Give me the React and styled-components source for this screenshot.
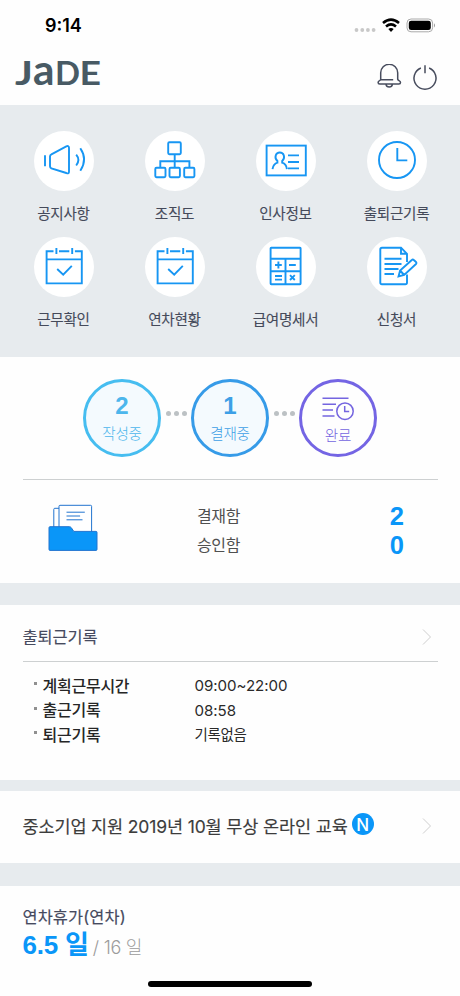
import React from "react";
import styled, { createGlobalStyle } from "styled-components";

const KR = '"Noto Sans CJK KR", sans-serif';
const SF = 'Inter, "Noto Sans CJK KR", sans-serif';
const AR = '"Liberation Sans", "Noto Sans CJK KR", sans-serif';

const Global = createGlobalStyle`
  * { box-sizing: border-box; }
  body { margin: 0; background: #fff; font-family: ${KR}; }
  svg { display: block; flex: none; }
`;

const Screen = styled.main`
  width: 460px;
  height: 996px;
  display: flex;
  flex-direction: column;
  overflow: hidden;
  background: #fefefe;
`;

const StatusBar = styled.div`
  height: 50px;
  display: flex;
  align-items: center;
  justify-content: space-between;
  padding: 0 24px 0 45px;
`;

const Clock = styled.span`
  font: 600 18px/24px ${SF};
  letter-spacing: 0;
  color: #000;
  padding-top: 2px;
`;

const Header = styled.header`
  height: 55px;
  display: flex;
  align-items: center;
  justify-content: space-between;
  padding: 0 22px 0 15px;
`;

const LogoMark = styled.svg`
  overflow: visible;
  fill: #485a64;
  font: 700 31px Lato, sans-serif;
`;

const Menu = styled.nav`
  height: 252px;
  flex: none;
  background: #e7ebee;
  display: grid;
  grid-template-columns: repeat(4, 111px);
  grid-auto-rows: 105.6px;
  padding: 26px 8px 0;
`;

const MenuItem = styled.div`
  display: flex;
  flex-direction: column;
  align-items: center;
  gap: 11px;
`;

const MenuIcon = styled.div`
  width: 60px;
  height: 60px;
  border-radius: 50%;
  background: #fff;
`;

const MenuLabel = styled.span`
  font: 400 14.6px/22px ${KR};
  letter-spacing: -0.3px;
  color: #454a5a;
  -webkit-text-stroke: 0.1px #454a5a;
  white-space: nowrap;
`;

const Card = styled.section`
  flex: none;
  height: ${(p) => p.$h}px;
  padding: 0 22.5px;
  background: #fefefe;
`;

const Divider = styled.div`
  flex: none;
  height: ${(p) => p.$h}px;
  background: #e7ebee;
`;

const Steps = styled.div`
  height: 123px;
  display: flex;
  align-items: flex-start;
  justify-content: center;
  padding-top: 22px;
  border-bottom: 1px solid #cdd0d1;
`;

const Step = styled.div`
  width: 78px;
  height: 78px;
  border-radius: 50%;
  border: 3px solid ${(p) => p.$c};
  background: ${(p) => p.$bg};
  color: ${(p) => p.$t};
  display: flex;
  flex-direction: column;
  align-items: center;
`;

const StepCount = styled.b`
  font: 700 24px/26px ${AR};
  margin-top: 11px;
`;

const StepIcon = styled.div`
  height: 24px;
  margin-top: 15px;
`;

const StepLabel = styled.span`
  font: 300 14.6px/22px ${KR};
  letter-spacing: -0.3px;
  margin-top: 3px;
`;

const StepDots = styled.div`
  width: 30px;
  display: flex;
  justify-content: center;
  gap: 3px;
  padding-top: 31.5px;
`;

const Dot = styled.i`
  width: 5px;
  height: 5px;
  border-radius: 50%;
  background: #bcc1c4;
`;

const Approval = styled.div`
  display: grid;
  grid-template-columns: 174px 1fr;
  padding: 21px 34px 0 0.5px;
`;

const FolderBox = styled.div`
  padding: 3px 0 0 25px;
`;

const ApprovalRow = styled.div`
  height: 28.7px;
  display: flex;
  align-items: center;
  justify-content: space-between;
  font: 400 16px/28px ${KR};
  letter-spacing: -0.4px;
  color: #505050;
`;

const ApprovalCount = styled.b`
  font: 700 25.5px/29px ${AR};
  color: #0a96f8;
  padding-top: 2px;
`;

const CardHead = styled.div`
  height: ${(p) => p.$h}px;
  display: flex;
  align-items: center;
  justify-content: space-between;
  padding: ${(p) => p.$pad || "0 6px 0 0"};
  border-bottom: ${(p) => (p.$line ? "1px solid #cdd0d1" : "none")};
`;

const Title = styled.h2`
  margin: 0;
  font: 400 16.4px/24px ${SF};
  letter-spacing: ${(p) => p.$ls || "-0.1px"};
  color: #464a5e;
  -webkit-text-stroke: 0.15px #464a5e;
  white-space: nowrap;
`;

const Records = styled.div`
  padding-top: 10px;
`;

const Record = styled.div`
  height: 24.5px;
  display: grid;
  grid-template-columns: 9px 152px 1fr;
  align-items: center;
  padding-left: 11px;
`;

const Bullet = styled.i`
  width: 3px;
  height: 3px;
  margin-bottom: 3px;
  background: #909090;
`;

const RecordName = styled.span`
  font: 500 16px/24px ${KR};
  letter-spacing: -0.25px;
  color: #262626;
  margin-top: -1px;
`;

const RecordValue = styled.span`
  font: 400 ${(p) => (p.$kr ? "14.5px" : "15.1px")}/24px ${SF};
  letter-spacing: ${(p) => (p.$kr ? "-0.3px" : "-0.05px")};
  color: #2a2a2a;
  padding-top: 2px;
`;

const NoticeText = styled.p`
  margin: 0;
  padding-top: 2px;
  display: flex;
  align-items: center;
  gap: 4px;
  font: 400 17.5px/24px ${SF};
  letter-spacing: -0.14px;
  color: #3c3c3c;
  -webkit-text-stroke: 0.15px #3c3c3c;
  white-space: nowrap;
`;

const NewBadge = styled.span`
  width: 22px;
  height: 22px;
  margin-bottom: 5px;
  border-radius: 50%;
  background: #0a96f8;
  color: #fff;
  font: 500 17px/25px ${SF};
  text-align: center;
  letter-spacing: 0;
  -webkit-text-stroke: 0;
`;

const Leave = styled.div`
  display: flex;
  align-items: baseline;
  height: 32px;
  padding-top: 1px;
  gap: 4px;
`;

const LeaveLeft = styled.b`
  font: 700 26px/30px ${AR};
  letter-spacing: -0.2px;
  color: #0a96f8;
`;

const LeaveTotal = styled.span`
  font: 300 18px/30px ${SF};
  letter-spacing: -0.25px;
  color: #9b9b9b;
`;

const HomeBar = styled.div`
  flex: none;
  width: 164px;
  height: 6px;
  margin: 0 auto;
  border-radius: 3px;
  background: #000;
`;

const Icon = ({ children }) => (
  <svg width="60" height="60" viewBox="0 0 60 60" fill="none" stroke="#1796f3" strokeWidth="1.9">
    {children}
  </svg>
);

const Speaker = () => (
  <Icon>
    <path d="M11 24.300v11M16 25.500Q16 24 17.400 23.300L32.300 15.400Q35 14.200 35 17v23.500Q35 43.300 32.300 42L17.400 37.300Q16 36.600 16 35.200zM42.200 23.700q4.400 5.300 0 10.800M46.300 17.300q7.600 11.200 0 22.400" />
  </Icon>
);

const OrgChart = () => (
  <Icon>
    <rect x="23.200" y="11.200" width="12.600" height="12" rx="1.200" />
    <rect x="10.300" y="36.800" width="10.200" height="9.400" rx="1.200" />
    <rect x="24.500" y="36.800" width="10.400" height="9.400" rx="1.200" />
    <rect x="39.200" y="36.800" width="10.200" height="9.400" rx="1.200" />
    <path d="M29.700 23.200v13.600M15.300 36.800V30.200H44.400v6.600" />
  </Icon>
);

const IdCard = () => (
  <Icon>
    <rect x="10.600" y="14.600" width="39.200" height="29.800" />
    <path d="M16.500 38.200c.6-3.600 2.600-5.900 4.900-6.500v-1.700c-3.600-3.300-1.700-8.500 2.400-8.500s5.900 5.200 2.400 8.500v1.700c2.400.7 4.300 2.900 4.700 6.500M32 24.400h11M32 31h11M32 37.400h11" />
  </Icon>
);

const ClockIcon = () => (
  <Icon>
    <circle cx="30" cy="29" r="18" />
    <path d="M30.300 17v12.400h10" />
  </Icon>
);

const Calendar = () => (
  <Icon>
    <path d="M19.500 14.200H12.600v32.200h35.200V14.200h-6.900M25 14.200h10.300M12.600 22.400h35.200M22.400 11v6M38.200 11v6M23.200 32l6 5.600 8.600-8.800" />
  </Icon>
);

const Calculator = () => (
  <Icon>
    <rect x="14.600" y="10.700" width="30" height="36.500" rx=".6" />
    <path d="M14.600 21.700h30M14.600 34.300h30M29.500 21.700v25.500M19 28h6.800M22.400 24.600v6.800M33 28h6.800M19 39h7M19 42.600h7M34 38.200l4.800 4.800M38.800 38.200L34 43" />
  </Icon>
);

const Form = () => (
  <Icon>
    <path d="M40 25V16.800L34 10.700H15q-1.700 0-1.700 1.700v33q0 1.800 1.700 1.800H38.300q1.700 0 1.700-1.800V37.500M34 10.700v6.100h6M17.500 21.800h17M17.500 27h17M17.500 32h14M17.500 37h9.500" />
    <path fill="#fff" d="M31.500 39.500l1.600-6L44.800 23q1-1 2 0l2.200 2q1 1 0 2L37.200 38zM33.100 33.500l4.100 4.500" />
  </Icon>
);

const MENU = [
  ["공지사항", Speaker],
  ["조직도", OrgChart],
  ["인사정보", IdCard],
  ["출퇴근기록", ClockIcon],
  ["근무확인", Calendar],
  ["연차현황", Calendar],
  ["급여명세서", Calculator],
  ["신청서", Form],
];

const RECORDS = [
  ["계획근무시간", "09:00~22:00", false],
  ["출근기록", "08:58", false],
  ["퇴근기록", "기록없음", true],
];

const StatusIcons = () => (
  <svg width="84" height="20" viewBox="0 0 84 20">
    <g fill="#c8c8c8">
      <circle cx="4.500" cy="15" r="1.900" />
      <circle cx="10.300" cy="15" r="1.900" />
      <circle cx="15.900" cy="15" r="1.900" />
      <circle cx="21.600" cy="15" r="1.900" />
    </g>
    <g fill="none" stroke="#000" strokeWidth="2.600">
      <path d="M31 8q8-6.800 16 0" />
      <path d="M34 11.500q5-4.200 10 0" />
    </g>
    <path d="M36.300 14q2.700-2 5.400 0L39 16.900z" />
    <rect x="55" y="4" width="25.600" height="12.800" rx="4" fill="none" stroke="#aaa" />
    <rect x="56.800" y="5.700" width="22" height="9.400" rx="2.400" />
    <path d="M82 8.200q2 2.200 0 4.400z" fill="#999" />
  </svg>
);

const LOGO_LETTERS = [
  { ch: "J", x: 0, w: 18, sy: 1.05 },
  { ch: "a", x: 18, w: 21.5, sy: 1.34 },
  { ch: "D", x: 40, w: 25, sy: 1.05 },
  { ch: "E", x: 64.5, w: 21.5, sy: 1.05 },
];

const Logo = () => (
  <LogoMark width="88" height="28" viewBox="0 0 88 28">
    {LOGO_LETTERS.map(({ ch, x, w, sy }) => (
      <text
        key={ch}
        transform={`translate(${x} 20.800) scale(1 ${sy})`}
        textLength={w}
        lengthAdjust="spacingAndGlyphs"
      >
        {ch}
      </text>
    ))}
  </LogoMark>
);

const HeaderIcons = () => (
  <svg width="62" height="28" viewBox="0 0 62 28" fill="none" stroke="#484d5e" strokeWidth="1.500">
    <path d="M4.700 15.300V8.800a8.500 8.500 0 0 1 17 0v6.500q.3 1 1.700 1.600 1.100.5 1.100 1.600 0 1.500-1.600 1.500H3.700q-1.600 0-1.600-1.500 0-1.100 1.100-1.600 1.500-.6 1.500-1.600zM4.700 15.800h12.500M10 20.300q.4 2.600 3.200 2.600t3.200-2.600" />
    <path d="M44.900 4a11 11 0 1 0 8.200 0M49 1.300v8" />
  </svg>
);

const Folder = () => (
  <svg width="50" height="48" viewBox="0 0 50 48" stroke="#2274cf" fill="#fff">
    <rect x="5.800" y="4.300" width="20" height="24" rx="1" />
    <rect x="11" y="1.300" width="32.600" height="34" rx="1" />
    <path d="M18.500 8.200h18.300M18.500 12h13.600M18.500 15.800h16" />
    <path fill="#0a96f8" d="M2 22.700h19.300q1.300 0 2 1l2.500 3.700H48q1 0 1 1v17q0 1-1 1H2q-1 0-1-1V23.700q0-1 1-1z" />
  </svg>
);

const ListClock = () => (
  <svg width="32" height="26" viewBox="0 0 32 26" fill="none" stroke="#7465e0" strokeWidth="1.500">
    <path d="M.5 1.300h26M.5 7.300h13.500M.5 13h10.500M.5 19h12" />
    <circle cx="23" cy="14.200" r="8.200" />
    <path d="M22.700 9v5.400h4.500" />
  </svg>
);

const Chevron = () => (
  <svg width="10" height="18" viewBox="0 0 10 18" fill="none" stroke="#cfcfcf">
    <path d="M1 1.500l7.500 7.500L1 16.500" />
  </svg>
);

const Dots = () => (
  <StepDots>
    <Dot />
    <Dot />
    <Dot />
  </StepDots>
);

export default function App() {
  return (
    <Screen>
      <Global />
      <StatusBar>
        <Clock>9:14</Clock>
        <StatusIcons />
      </StatusBar>
      <Header>
        <Logo />
        <HeaderIcons />
      </Header>
      <Menu>
        {MENU.map(([label, Glyph]) => (
          <MenuItem key={label}>
            <MenuIcon>
              <Glyph />
            </MenuIcon>
            <MenuLabel>{label}</MenuLabel>
          </MenuItem>
        ))}
      </Menu>
      <Card $h={226}>
        <Steps>
          <Step $c="#46bdf0" $bg="#f4fafe" $t="#4cb6ec">
            <StepCount>2</StepCount>
            <StepLabel>작성중</StepLabel>
          </Step>
          <Dots />
          <Step $c="#369be8" $bg="#f4fafe" $t="#3d9fe6">
            <StepCount>1</StepCount>
            <StepLabel>결재중</StepLabel>
          </Step>
          <Dots />
          <Step $c="#7465e4" $bg="#fefefe" $t="#7465e0">
            <StepIcon>
              <ListClock />
            </StepIcon>
            <StepLabel>완료</StepLabel>
          </Step>
        </Steps>
        <Approval>
          <FolderBox>
            <Folder />
          </FolderBox>
          <div>
            <ApprovalRow>
              결재함<ApprovalCount>2</ApprovalCount>
            </ApprovalRow>
            <ApprovalRow>
              승인함<ApprovalCount>0</ApprovalCount>
            </ApprovalRow>
          </div>
        </Approval>
      </Card>
      <Divider $h={22} />
      <Card $h={175}>
        <CardHead $h={57} $line $pad="8px 6px 0 0">
          <Title>출퇴근기록</Title>
          <Chevron />
        </CardHead>
        <Records>
          {RECORDS.map(([name, value, kr]) => (
            <Record key={name}>
              <Bullet />
              <RecordName>{name}</RecordName>
              <RecordValue $kr={kr}>{value}</RecordValue>
            </Record>
          ))}
        </Records>
      </Card>
      <Divider $h={11} />
      <Card $h={72}>
        <CardHead $h={69}>
          <NoticeText>
            중소기업 지원 2019년 10월 무상 온라인 교육
            <NewBadge>N</NewBadge>
          </NoticeText>
          <Chevron />
        </CardHead>
      </Card>
      <Divider $h={23} />
      <Card $h={95}>
        <CardHead $h={43} $pad="19px 0 0">
          <Title $ls="0.1px">연차휴가(연차)</Title>
        </CardHead>
        <Leave>
          <LeaveLeft>6.5 일</LeaveLeft>
          <LeaveTotal>/ 16 일</LeaveTotal>
        </Leave>
      </Card>
      <HomeBar />
    </Screen>
  );
}
